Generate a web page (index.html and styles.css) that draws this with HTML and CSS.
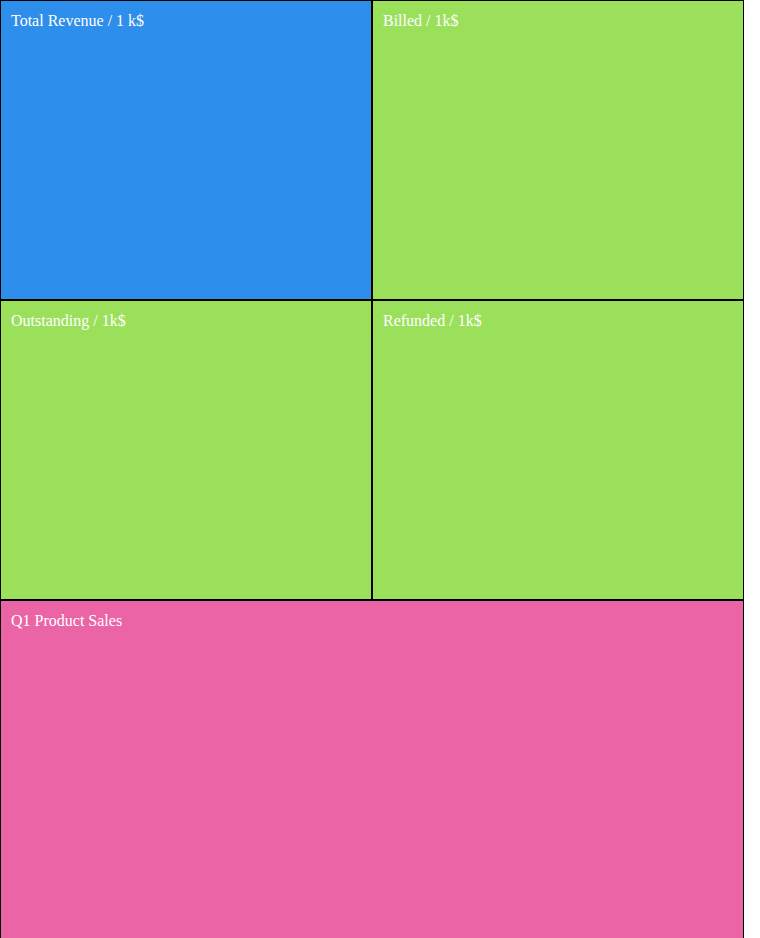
FILE: index.html
```html
<!DOCTYPE html>
<html lang="en">
<head>
    <meta charset="UTF-8">
    <meta name="viewport" content="width=device-width, initial-scale=1.0">
    <title>Dashboard</title>
    <link rel="stylesheet" href="styles.css">
</head>
<body>
    <div class="dashboard">
        <div class="tile blue">Total Revenue / 1 k$</div>
        <div class="tile green">Billed / 1k$</div>
        <div class="tile green">Outstanding / 1k$</div>
        <div class="tile green">Refunded / 1k$</div>
        <div class="tile pink wide">Q1 Product Sales</div>
    </div>
</body>
</html>
```

FILE: styles.css
```css
body {
    margin: 0;
    background-color: #fff;
    font-family: "Liberation Serif", "Times New Roman", serif;
}
.dashboard {
    display: grid;
    grid-template-columns: 372px 372px;
    width: 744px;
}
.tile {
    box-sizing: border-box;
    height: 300px;
    padding: 11px 10px 10px;
    border: 1px solid #000;
    color: #fff;
    font-size: 16px;
}
.wide {
    grid-column: 1 / 3;
    height: 400px;
}
.blue {
    background-color: #2e8eeb;
}
.green {
    background-color: #9be05b;
}
.pink {
    background-color: #eb64a6;
}
```
